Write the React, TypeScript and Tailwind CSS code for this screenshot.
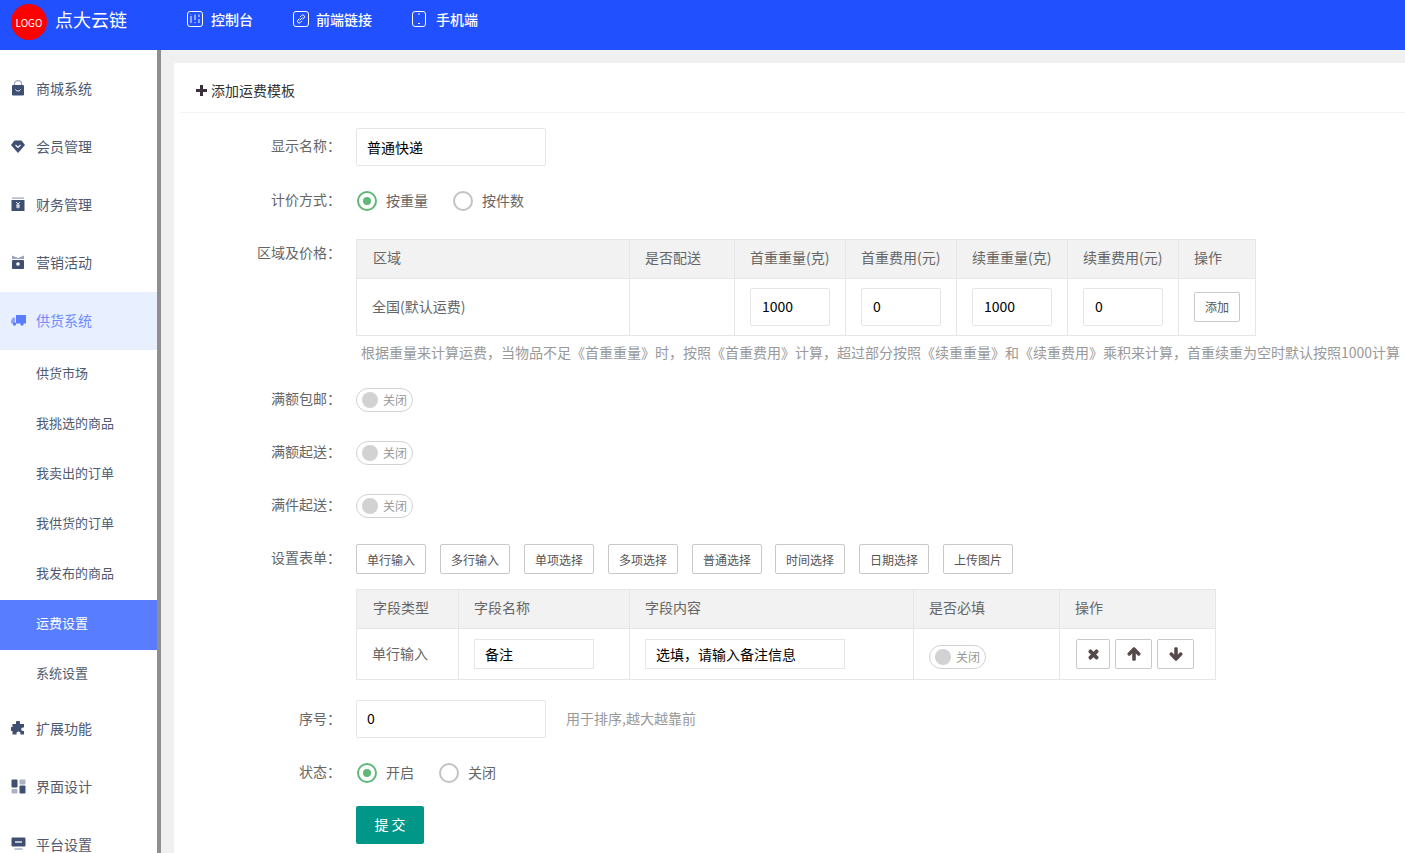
import React from "react";
import { FaTimes, FaArrowUp, FaArrowDown } from "react-icons/fa";

const FONT = '"Noto Sans CJK SC", "Noto Sans", sans-serif';

function Bag() {
  return (
    <svg width="14" height="16" viewBox="0 0 14 16">
      <path d="M3.5 5V3.6a3.5 3 0 0 1 7 0V5" fill="none" stroke="#9aa5bb" strokeWidth="1.2" />
      <rect x="1" y="5" width="12" height="10.5" rx="1.2" fill="#3f4f72" />
      <path d="M4.5 9.5c.8 2 4.2 2 5 0" fill="none" stroke="#fff" strokeWidth="1" />
    </svg>
  );
}
function Gem() {
  return (
    <svg width="14" height="13" viewBox="0 0 14 13">
      <path d="M3.5 .5h7L14 5l-7 8-7-8z" fill="#3f4f72" />
      <path d="M4.5 5 7 7.5 9.5 5" fill="none" stroke="#fff" strokeWidth="1.1" />
    </svg>
  );
}
function Money() {
  return (
    <svg width="14" height="14" viewBox="0 0 14 14">
      <rect x="1" y="0.5" width="12" height="1.2" fill="#9aa5bb" />
      <rect x="0.5" y="3" width="13" height="11" fill="#3f4f72" />
      <path d="M5 5l2 2 2-2M7 7v4.5M5 8.2h4M5 10h4" fill="none" stroke="#fff" strokeWidth="0.9" />
    </svg>
  );
}
function Gift() {
  return (
    <svg width="14" height="14" viewBox="0 0 14 14">
      <path d="M1 .5 7 3l6-2.5V4H1z" fill="#9aa5bb" />
      <rect x="1" y="5" width="12" height="9" rx="1" fill="#3f4f72" />
      <circle cx="7" cy="9" r="1.8" fill="#fff" />
    </svg>
  );
}
function Truck() {
  return (
    <svg width="15" height="12" viewBox="0 0 15 12">
      <path d="M5 1h10v8.5H5z" fill="#5a7dff" />
      <path d="M4 3.5H2L0 6.5v3h4z" fill="#8ba3ff" />
      <circle cx="3.5" cy="10" r="1.7" fill="#5a7dff" />
      <circle cx="11" cy="10" r="1.7" fill="#5a7dff" />
    </svg>
  );
}
function Puzzle() {
  return (
    <svg width="14" height="14" viewBox="0 0 14 14">
      <path d="M5 1.5a2 2 0 0 1 4 0V3h4v3.5h-1a1.8 1.8 0 0 0 0 3.6h1V13.500H9.500v-1a2 2 0 0 0-4 0v1H1.500V10H.8a2 2 0 0 1 0-4h.7V3H5z" fill="#3f4f72" />
    </svg>
  );
}
function Grid() {
  return (
    <svg width="15" height="15" viewBox="0 0 15 15">
      <rect x="0.500" y="0.500" width="6" height="8" rx="1" fill="#3f4f72" />
      <rect x="8.500" y="0.500" width="6" height="5" rx="1" fill="#aab3c5" />
      <rect x="8.500" y="6.500" width="6" height="8" rx="1" fill="#3f4f72" />
      <rect x="0.500" y="10" width="6" height="4.500" rx="1" fill="#aab3c5" />
    </svg>
  );
}
function Monitor() {
  return (
    <svg width="15" height="14" viewBox="0 0 15 14">
      <rect x="0.500" y="0.500" width="14" height="9" rx="1.200" fill="#3f4f72" />
      <path d="M4 5h7" stroke="#fff" strokeWidth="1.300" />
      <path d="M3.500 12h8" stroke="#aab3c5" strokeWidth="1.500" />
    </svg>
  );
}

function NavSliders() {
  return (
    <svg width="16" height="16" viewBox="0 0 16 16" fill="none" stroke="#fff" strokeWidth="1">
      <rect x="0.500" y="0.500" width="15" height="15" rx="2.500" />
      <path d="M4 5v7M4 3.500v.5M8 3.500V9M8 11v1M12 3.500V6M12 8v4" />
    </svg>
  );
}
function NavLink() {
  return (
    <svg width="16" height="16" viewBox="0 0 16 16" fill="none" stroke="#fff" strokeWidth="1">
      <rect x="0.500" y="0.500" width="15" height="15" rx="2.500" />
      <path d="M7 6l1.500-1.500a1.700 1.700 0 0 1 2.500 2.500L9.500 8.500M9 10l-1.500 1.500a1.700 1.700 0 0 1-2.500-2.500L6.500 7.500M6.500 9.500l3-3" />
    </svg>
  );
}
function NavPhone() {
  return (
    <svg width="14" height="16" viewBox="0 0 14 16" fill="none" stroke="#fff" strokeWidth="1">
      <rect x="0.500" y="0.500" width="13" height="15" rx="2.500" />
      <path d="M6 3h2M6 12.500h2" />
    </svg>
  );
}

function TopNav({ icon, label, className, iconW }: { icon: React.ReactNode; label: string; className: string; iconW: string }) {
  return (
    <div className={`flex items-center ${className}`}>
      <span className={`flex items-center ${iconW}`}>{icon}</span>
      <span className="text-[14px] font-medium text-white">{label}</span>
    </div>
  );
}

function MainItem({ icon, label, active }: { icon: React.ReactNode; label: string; active?: boolean }) {
  return (
    <div className={`flex h-[58px] items-center pb-[2px] pl-[11px] text-[14px] ${active ? "bg-[#e8efff] text-[#6e8bff]" : "text-[#4f5a70]"}`}>
      <span className="flex w-[25px] items-center">{icon}</span>
      <span>{label}</span>
    </div>
  );
}
function SubItem({ label, active }: { label: string; active?: boolean }) {
  return (
    <div className={`flex h-[50px] items-center pb-[4px] pl-[36px] text-[13px] ${active ? "bg-[#587dff] text-white" : "text-[#4f5a70]"}`}>
      {label}
    </div>
  );
}

function Label({ children, tight }: { children: React.ReactNode; tight?: boolean }) {
  return (
    <div className={`w-[144px] shrink-0 text-right text-[14px] leading-[20px] text-[#666] ${tight ? "pb-[3px]" : "pb-[5px]"}`}>{children}</div>
  );
}

function Radio({ label, on, className }: { label: string; on?: boolean; className: string }) {
  return (
    <div className={`flex items-center ${className}`}>
      <span className={`flex h-[20px] w-[20px] items-center justify-center rounded-full border-2 ${on ? "border-[#5fb878]" : "border-[#c2c2c2]"}`}>
        {on && <span className="h-[8px] w-[8px] rounded-full bg-[#5fb878]" />}
      </span>
      <span className="ml-[9px] pb-[2px] text-[14px] text-[#666]">{label}</span>
    </div>
  );
}

function Switch() {
  return (
    <div className="flex h-[24px] w-[57px] items-center rounded-full border border-[#d2d2d2] pl-[5px]">
      <span className="h-[16px] w-[16px] rounded-full bg-[#d2d2d2]" />
      <span className="ml-[5px] text-[12px] text-[#999]">关闭</span>
    </div>
  );
}

function NumCell({ value }: { value: string }) {
  return (
    <td className="border border-[#e6e6e6] px-[15px]">
      <div className="flex h-[38px] w-[80px] items-center rounded-[2px] border border-[#e6e6e6] pb-[2px] pl-[11px] text-[14px] text-black">{value}</div>
    </td>
  );
}

function Th({ children, first }: { children: React.ReactNode; first?: boolean }) {
  return (
    <th className={`border border-[#e6e6e6] bg-[#f2f2f2] pb-[3px] text-left text-[14px] font-normal text-[#666] ${first ? "pl-[16px]" : "pl-[15px]"}`}>
      {children}
    </th>
  );
}

function IconBtn({ children, w }: { children: React.ReactNode; w: string }) {
  return (
    <span className={`flex h-[30px] items-center justify-center rounded-[2px] border border-[#c9c9c9] text-[#55494a] ${w}`}>{children}</span>
  );
}

export default function App() {
  return (
    <div className="flex h-[853px] w-[1405px] flex-col overflow-hidden bg-[#f0f0f0]" style={{ fontFamily: FONT }}>
      <header className="flex h-[50px] shrink-0 items-start bg-[#2050ff] text-white">
        <div className="ml-[11px] mt-[4px] flex h-[36px] w-[36px] items-center justify-center rounded-full bg-[#ff0000] text-[10px]">LOGO</div>
        <div className="ml-[8px] mt-[6px] text-[18px] leading-[26px]">点大云链</div>
        <div className="mt-[10px] flex h-[18px] items-center">
          <TopNav icon={<NavSliders />} label="控制台" className="ml-[60px]" iconW="w-[24px]" />
          <TopNav icon={<NavLink />} label="前端链接" className="ml-[40px]" iconW="w-[23px]" />
          <TopNav icon={<NavPhone />} label="手机端" className="ml-[40px]" iconW="w-[24px]" />
        </div>
      </header>
      <div className="flex min-h-0 flex-1">
        <aside className="w-[161px] shrink-0 overflow-hidden border-r-4 border-[#8f8f8f] bg-white pt-[10px]">
          <MainItem icon={<Bag />} label="商城系统" />
          <MainItem icon={<Gem />} label="会员管理" />
          <MainItem icon={<Money />} label="财务管理" />
          <MainItem icon={<Gift />} label="营销活动" />
          <MainItem icon={<Truck />} label="供货系统" active />
          <SubItem label="供货市场" />
          <SubItem label="我挑选的商品" />
          <SubItem label="我卖出的订单" />
          <SubItem label="我供货的订单" />
          <SubItem label="我发布的商品" />
          <SubItem label="运费设置" active />
          <SubItem label="系统设置" />
          <MainItem icon={<Puzzle />} label="扩展功能" />
          <MainItem icon={<Grid />} label="界面设计" />
          <MainItem icon={<Monitor />} label="平台设置" />
        </aside>
        <main className="min-w-0 flex-1 overflow-hidden pl-[13px] pt-[13px]">
          <div className="h-[800px] w-[1300px] rounded-[2px] bg-white">
            <div className="mx-[7px] flex h-[50px] items-center border-b border-[#f2f2f2] pl-[15px] pt-[6px] text-[14px] text-[#333]">
              <svg width="11" height="11" viewBox="0 0 11 11" className="mr-[4px]"><path d="M4 0h3v4h4v3H7v4H4V7H0V4h4z" fill="#3a2f3a" /></svg>
              添加运费模板
            </div>
            <div className="pl-[23px] pt-[15px]">
              <div className="flex items-start">
                <Label><div className="pt-[7px]">显示名称：</div></Label>
                <div className="ml-[15px] flex h-[38px] w-[190px] items-center rounded-[2px] border border-[#e6e6e6] pl-[10px] text-[14px] text-black">普通快递</div>
              </div>
              <div className="mt-[24px] flex h-[22px] items-center">
                <Label>计价方式：</Label>
                <Radio label="按重量" on className="ml-[16px]" />
                <Radio label="按件数" className="ml-[25px]" />
              </div>
              <div className="mt-[27px] flex items-start">
                <Label><div className="pt-[3px]">区域及价格：</div></Label>
                <div className="ml-[15px] min-w-0">
                  <table className="w-[900px] table-fixed border-collapse">
                    <colgroup>
                      <col className="w-[273px]" /><col className="w-[105px]" /><col className="w-[111px]" /><col className="w-[111px]" /><col className="w-[111px]" /><col className="w-[111px]" /><col className="w-[77px]" />
                    </colgroup>
                    <thead>
                      <tr className="h-[39px]">
                        <Th first>区域</Th><Th>是否配送</Th><Th>首重重量(克)</Th><Th>首重费用(元)</Th><Th>续重重量(克)</Th><Th>续重费用(元)</Th><Th>操作</Th>
                      </tr>
                    </thead>
                    <tbody>
                      <tr className="h-[57px] text-[14px] text-[#666]">
                        <td className="border border-[#e6e6e6] px-[15px] pb-[2px]">全国(默认运费)</td>
                        <td className="border border-[#e6e6e6]" />
                        <NumCell value="1000" />
                        <NumCell value="0" />
                        <NumCell value="1000" />
                        <NumCell value="0" />
                        <td className="border border-[#e6e6e6] px-[15px]">
                          <span className="flex h-[30px] w-[46px] items-center justify-center rounded-[2px] border border-[#c9c9c9] text-[12px] text-[#555]">添加</span>
                        </td>
                      </tr>
                    </tbody>
                  </table>
                  <div className="mt-[6px] whitespace-nowrap pl-[5px] text-[14px] leading-[20px] text-[#999]">根据重量来计算运费，当物品不足《首重重量》时，按照《首重费用》计算，超过部分按照《续重重量》和《续重费用》乘积来计算，首重续重为空时默认按照1000计算</div>
                </div>
              </div>
              <div className="mt-[26px] flex h-[24px] items-center">
                <Label>满额包邮：</Label>
                <div className="ml-[15px]"><Switch /></div>
              </div>
              <div className="mt-[29px] flex h-[24px] items-center">
                <Label>满额起送：</Label>
                <div className="ml-[15px]"><Switch /></div>
              </div>
              <div className="mt-[29px] flex h-[24px] items-center">
                <Label>满件起送：</Label>
                <div className="ml-[15px]"><Switch /></div>
              </div>
              <div className="mt-[26px] flex items-start">
                <Label><div className="pt-[3px]">设置表单：</div></Label>
                <div className="ml-[15px]">
                  <div className="flex h-[30px] text-[12px] text-[#555]">
                    {[
                      ["单行输入", "ml-0"],
                      ["多行输入", "ml-[14px]"],
                      ["单项选择", "ml-[14px]"],
                      ["多项选择", "ml-[14px]"],
                      ["普通选择", "ml-[14px]"],
                      ["时间选择", "ml-[13px]"],
                      ["日期选择", "ml-[14px]"],
                      ["上传图片", "ml-[14px]"],
                    ].map(([t, m]) => (
                      <span key={t} className={`flex w-[70px] items-center justify-center rounded-[2px] border border-[#c9c9c9] pt-[2px] ${m}`}>{t}</span>
                    ))}
                  </div>
                  <table className="mt-[15px] w-[859px] table-fixed border-collapse">
                    <colgroup>
                      <col className="w-[102px]" /><col className="w-[171px]" /><col className="w-[284px]" /><col className="w-[146px]" /><col className="w-[156px]" />
                    </colgroup>
                    <thead>
                      <tr className="h-[39px]">
                        <Th first>字段类型</Th><Th>字段名称</Th><Th>字段内容</Th><Th>是否必填</Th><Th>操作</Th>
                      </tr>
                    </thead>
                    <tbody>
                      <tr className="h-[51px] text-[14px] text-[#666]">
                        <td className="border border-[#e6e6e6] px-[15px] pb-[2px]">单行输入</td>
                        <td className="border border-[#e6e6e6] px-[15px]">
                          <div className="flex h-[30px] w-[120px] items-center border border-[#e6e6e6] pl-[10px] text-[14px] text-black">备注</div>
                        </td>
                        <td className="border border-[#e6e6e6] px-[15px]">
                          <div className="flex h-[30px] w-[200px] items-center border border-[#e6e6e6] pl-[10px] text-[14px] text-black">选填，请输入备注信息</div>
                        </td>
                        <td className="border border-[#e6e6e6] px-[15px]">
                          <div className="pt-[5px]"><Switch /></div>
                        </td>
                        <td className="border border-[#e6e6e6] px-[16px]">
                          <div className="flex gap-[5px]">
                            <IconBtn w="w-[34px]"><FaTimes size={13} stroke="currentColor" strokeWidth={50} /></IconBtn>
                            <IconBtn w="w-[37px]"><FaArrowUp size={14} stroke="currentColor" strokeWidth={50} /></IconBtn>
                            <IconBtn w="w-[37px]"><FaArrowDown size={14} stroke="currentColor" strokeWidth={50} /></IconBtn>
                          </div>
                        </td>
                      </tr>
                    </tbody>
                  </table>
                </div>
              </div>
              <div className="mt-[20px] flex items-center">
                <Label tight>序号：</Label>
                <div className="ml-[15px] flex h-[38px] w-[190px] items-center rounded-[2px] border border-[#e6e6e6] pb-[2px] pl-[10px] text-[14px] text-black">0</div>
                <span className="ml-[20px] pb-[2px] text-[14px] text-[#999]">用于排序,越大越靠前</span>
              </div>
              <div className="mt-[24px] flex h-[22px] items-center">
                <Label>状态：</Label>
                <Radio label="开启" on className="ml-[16px]" />
                <Radio label="关闭" className="ml-[25px]" />
              </div>
              <div className="ml-[159px] mt-[22px] flex h-[38px] w-[68px] items-center justify-center rounded-[2px] bg-[#009688] pb-[2px] text-[14px] text-white">提 交</div>
            </div>
          </div>
        </main>
      </div>
    </div>
  );
}
